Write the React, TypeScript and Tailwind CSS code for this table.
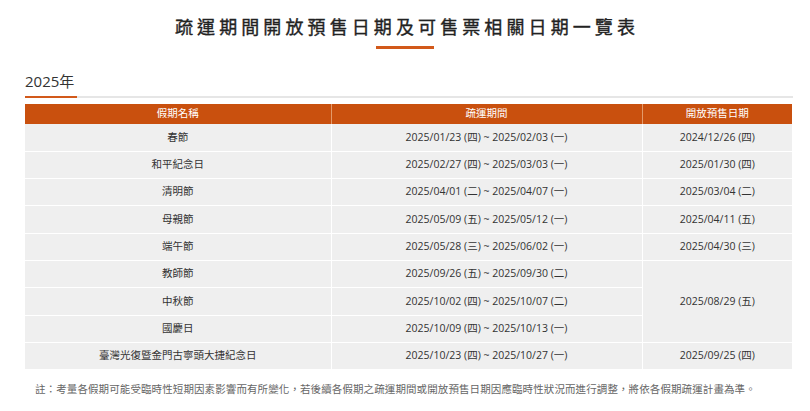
import React from "react";

const rows = [
  { name: "春節", period: "2025/01/23 (四) ~ 2025/02/03 (一)", sale: "2024/12/26 (四)" },
  { name: "和平紀念日", period: "2025/02/27 (四) ~ 2025/03/03 (一)", sale: "2025/01/30 (四)" },
  { name: "清明節", period: "2025/04/01 (二) ~ 2025/04/07 (一)", sale: "2025/03/04 (二)" },
  { name: "母親節", period: "2025/05/09 (五) ~ 2025/05/12 (一)", sale: "2025/04/11 (五)" },
  { name: "端午節", period: "2025/05/28 (三) ~ 2025/06/02 (一)", sale: "2025/04/30 (三)" },
  { name: "教師節", period: "2025/09/26 (五) ~ 2025/09/30 (二)", sale: "2025/08/29 (五)", span: 3 },
  { name: "中秋節", period: "2025/10/02 (四) ~ 2025/10/07 (二)", skip: true },
  { name: "國慶日", period: "2025/10/09 (四) ~ 2025/10/13 (一)", skip: true },
  { name: "臺灣光復暨金門古寧頭大捷紀念日", period: "2025/10/23 (四) ~ 2025/10/27 (一)", sale: "2025/09/25 (四)" },
];

export default function App() {
  return (
    <div className="min-h-screen w-[810px] bg-white text-[#333] font-['Open_Sans','Noto_Sans_CJK_TC',sans-serif] pt-[17px]">
      <h1 className="text-center text-[18px] leading-[20px] font-normal tracking-[4.1px] text-[#222] pl-[4px] [-webkit-text-stroke:0.35px_#222]">
        疏運期間開放預售日期及可售票相關日期一覽表
      </h1>
      <div className="mx-auto mt-[9px] w-[58px] h-[3px] bg-[#d2591a]" />

      <div className="ml-[25px] w-[768px] mt-[22px]">
        <div className="text-[15px] leading-[20px] text-[#333]">2025年</div>
        <div className="mt-[5px] flex h-[2px]">
          <div className="w-[52px] bg-[#d2591a]" />
          <div className="flex-1 bg-[#e6e6e6]" />
        </div>

        <table className="mt-[6px] w-[767px] border-collapse table-fixed text-[10.5px]">
          <colgroup>
            <col className="w-[306px]" />
            <col className="w-[311px]" />
            <col className="w-[150px]" />
          </colgroup>
          <thead>
            <tr className="h-[20px] bg-[#c9500e] text-white">
              <th className="font-normal border-r border-[#e39a6a] p-0">假期名稱</th>
              <th className="font-normal border-r border-[#e39a6a] p-0">疏運期間</th>
              <th className="font-normal p-0">開放預售日期</th>
            </tr>
          </thead>
          <tbody>
            {rows.map((r) => (
              <tr key={r.name} className="h-[27.3px] bg-[#efefef] text-[#333]">
                <td className="text-center border-b border-r border-white p-0">{r.name}</td>
                <td className="text-center border-b border-r border-white p-0">{r.period}</td>
                {!r.skip && (
                  <td rowSpan={r.span ?? 1} className="text-center border-b border-white p-0">
                    {r.sale}
                  </td>
                )}
              </tr>
            ))}
          </tbody>
        </table>

        <p className="mt-[12px] pl-[10px] text-[10.5px] leading-[14px] text-[#666] tracking-[0.1px]">
          註：考量各假期可能受臨時性短期因素影響而有所變化，若後續各假期之疏運期間或開放預售日期因應臨時性狀況而進行調整，將依各假期疏運計畫為準。
        </p>
      </div>
    </div>
  );
}
